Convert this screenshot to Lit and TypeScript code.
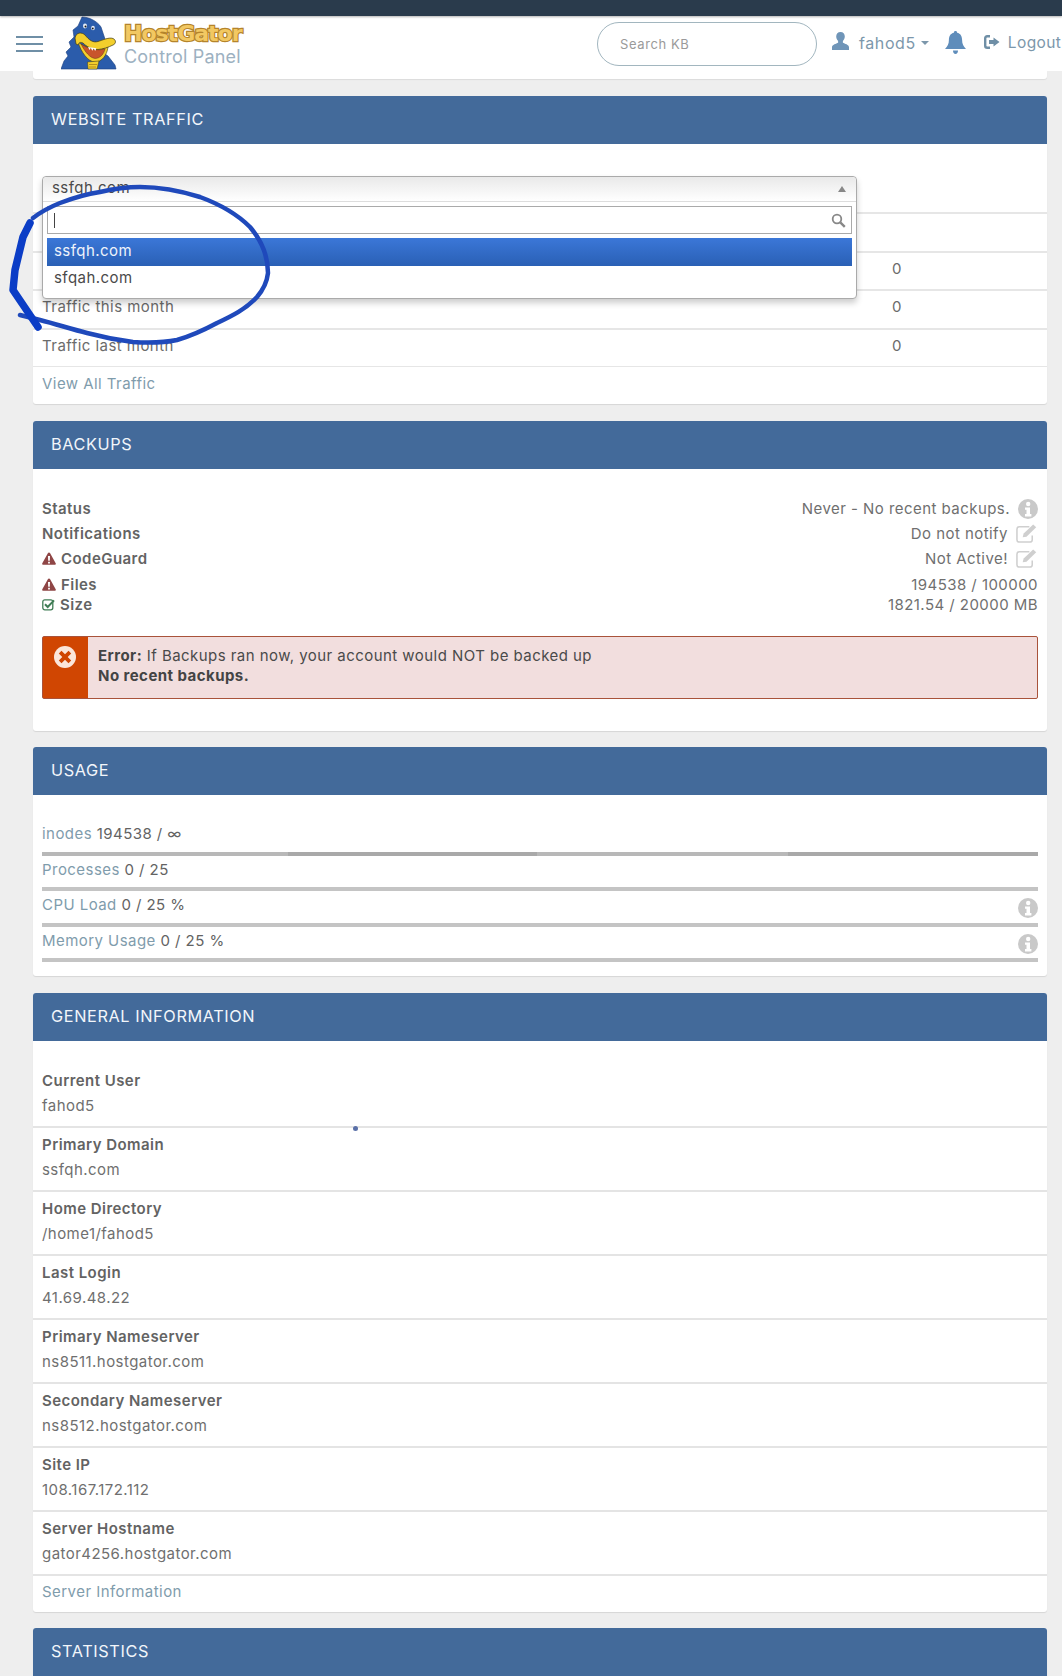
import { LitElement, html, css, svg } from "lit";
import { customElement } from "lit/decorators.js";

const infoIcon = html`<svg class="ic-info" viewBox="0 0 20 20"><circle cx="10" cy="10" r="10" fill="#c9c9c9"/><circle cx="10.2" cy="5" r="2.2" fill="#fff"/><path d="M7 8.4h5v6.6h1.4v2.4H7V15h1.5v-4.2H7z" fill="#fff"/></svg>`;
const editIcon = html`<svg class="ic-edit" viewBox="0 0 24 22"><path d="M15 4H4.500C3 4 2 5 2 6.500V17.500C2 19 3 20 4.500 20H15.500C17 20 18 19 18 17.500V13" fill="none" stroke="#cfcfcf" stroke-width="1.600"/><path d="M8 15l1-4L19 1.500l3.200 3L12 14.500z" fill="#cfcfcf"/></svg>`;
const warnIcon = html`<svg class="ic-warn" viewBox="0 0 14 13"><path d="M7 .5c.5 0 .8.2 1 .6l5.700 10.200c.4.700-.1 1.500-.8 1.500H1.100c-.7 0-1.200-.8-.8-1.500L6 1.100c.2-.4.500-.6 1-.6z" fill="#8f4646"/><path d="M6 4h2l-.2 4.700H6.200zM6.100 9.700h1.800v1.700H6.100z" fill="#fff"/></svg>`;
const checkIcon = html`<svg class="ic-check" viewBox="0 0 13 13"><rect x=".8" y="1.800" width="10" height="10" rx="2" fill="none" stroke="#3f7d55" stroke-width="1.300"/><path d="M3 6.200l2.700 2.800L12 2.400" fill="none" stroke="#3f7d55" stroke-width="2"/></svg>`;

const generalRows: [string, string][] = [
  ["Current User", "fahod5"],
  ["Primary Domain", "ssfqh.com"],
  ["Home Directory", "/home1/fahod5"],
  ["Last Login", "41.69.48.22"],
  ["Primary Nameserver", "ns8511.hostgator.com"],
  ["Secondary Nameserver", "ns8512.hostgator.com"],
  ["Site IP", "108.167.172.112"],
  ["Server Hostname", "gator4256.hostgator.com"],
];

@customElement("app-root")
export class AppRoot extends LitElement {
  static styles = css`
    :host {
      display: block;
      position: relative;
      height: 1676px;
      overflow: hidden;
      background: #eeeeee;
      font-family: Inter, "Liberation Sans", sans-serif;
      font-size: 15px;
      letter-spacing: 0.45px;
      color: #6b6b6b;
    }
    .topbar { height: 16px; background: #2a3b4c; box-shadow: 0 1px 2px rgba(0,0,0,.3); position: relative; }
    .header { height: 55px; background: #fff; display: flex; align-items: center; white-space: nowrap; overflow: hidden; }
    .header > * { flex: none; }
    .burger { width: 27px; margin-left: 16px; display: flex; flex-direction: column; gap: 5px; }
    .burger i { display: block; height: 2px; background: #6f8fa6; }
    .logo { width: 56px; height: 54px; margin: -1px 0 0 18px; }
    .brand { margin-left: 7px; display: flex; flex-direction: column; width: 249px; margin-top: 3px; }
    .brand b {
      font: 900 22px/24px "DejaVu Sans", sans-serif;
      letter-spacing: -1px;
      color: #f2c862;
      -webkit-text-stroke: 2.400px #b4842c;
      paint-order: stroke fill;
    }
    .brand span { font: 400 18px/22px Inter, sans-serif; letter-spacing: 0.2px; color: #9db1c1; }
    .search {
      box-sizing: border-box;
      width: 220px; height: 44px; margin-left: 224px;
      border: 1px solid #a2b6bf; border-radius: 22px;
      padding: 2px 22px; font: inherit; font-size: 13px; letter-spacing: .6px; outline: none; background: #fff;
    }
    .search::placeholder { color: #9a9a9a; }
    .ic-user { width: 17px; height: 18px; margin: -5px 10px 0 15px; }
    .uname { color: #7c97ab; font-size: 16px; letter-spacing: .6px; margin-top: -2px; }
    .uname.out { font-size: 15.500px; letter-spacing: .4px; }
    .caret { width: 0; height: 0; border: 4.500px solid transparent; border-top-color: #7c97ab; border-bottom: 0; margin: -1px 0 0 5px; }
    .ic-bell { width: 21px; height: 23px; margin: -2px 0 0 16px; }
    .ic-logout { width: 16px; height: 14px; margin: -4px 8px 0 18px; }

    main { padding: 0 15px 0 33px; }
    .stub { height: 8px; background: #fff; border-radius: 0 0 3px 3px; box-shadow: 0 1px 1px rgba(0,0,0,.08); margin-bottom: 17px; }
    .panel { position: relative; background: #fff; border-radius: 3px; box-shadow: 0 1px 1px rgba(0,0,0,.1); margin-bottom: 17px; }
    .panel.b16 { margin-bottom: 16px; }
    .phead {
      box-sizing: border-box; height: 48px; padding: 0 0 2px 18px; background: #436a9a; color: #f2f6fa;
      display: flex; align-items: center; font-size: 16.300px; letter-spacing: .6px; border-radius: 3px 3px 0 0;
    }
    a { color: #7f9cac; text-decoration: none; }

    .trow { box-sizing: border-box; display: grid; grid-template-columns: 850px 1fr; align-items: center; padding: 0 0 5px 9px; height: 38.500px; border-top: 2px solid #e6e6e6; }
    .trow.first { height: 68px; border-top: 0; }
    .trow.link { border-top-width: 1px; height: 38px; padding-bottom: 5px; }

    .drop {
      position: absolute; left: 9px; top: 80px; width: 815px; height: 123px; box-sizing: border-box;
      background: #fff; border: 1px solid #aaa; border-radius: 4px;
      box-shadow: 0 4px 6px rgba(0,0,0,.2); color: #4a4a4a;
    }
    .dtop {
      box-sizing: border-box; height: 25px; padding: 0 0 4px 9px; display: flex; align-items: center; justify-content: space-between;
      background: linear-gradient(#e9e9e9, #fff); border-bottom: 1px solid #ddd; border-radius: 4px 4px 0 0;
    }
    .arrow { width: 0; height: 0; border: 4px solid transparent; border-bottom: 6px solid #888; border-top: 0; margin: 4px 10px 0 0; }
    .dsearch { box-sizing: border-box; height: 28px; margin: 4px 4px 4px 4px; border: 1px solid #aaa; display: flex; align-items: center; justify-content: space-between; padding: 0 5px 0 6px; }
    .cursor { width: 1px; height: 15px; background: #444; }
    .ic-mag { width: 15px; height: 15px; }
    .opt { box-sizing: border-box; height: 28px; margin: 0 4px; padding: 0 0 4px 7px; display: flex; align-items: center; }
    .opt.sel { color: #eef3fb; background: linear-gradient(#3b77d8, #2a60b5); }
    .opt + .opt { height: 26px; }

    .bbody { padding: 27px 9px 32px; }
    .brow { display: flex; justify-content: space-between; align-items: center; height: 25px; }
    .brow.h24 { height: 24.500px; }
    .brow.h27 { height: 27px; }
    .brow.h14 { height: 14px; }
    .lab { font-weight: 600; color: #636363; display: flex; align-items: center; }
    .val { display: flex; align-items: center; color: #6f6f6f; }
    .ic-info { width: 20px; height: 20px; margin-left: 8px; flex: none; }
    .ic-edit { width: 23px; height: 21px; margin-left: 7px; flex: none; }
    .ic-warn { width: 14px; height: 13px; margin-right: 5px; flex: none; }
    .ic-check { width: 13px; height: 13px; margin-right: 5px; flex: none; }
    .err {
      box-sizing: border-box; margin-top: 24.500px; height: 63px; display: flex; background: #f2dede;
      border: 1px solid #a9533b; border-radius: 2px; color: #4a4a4a;
    }
    .err .side { width: 45px; background: #d04602; display: flex; justify-content: center; padding: 9px 2px 0 0; box-sizing: border-box; flex: none; }
    .ic-x { width: 22px; height: 22px; }
    .err .msg { padding: 9px 0 0 10px; line-height: 20px; }
    .err b { font-weight: 700; color: #444; }

    .ubody { padding: 25px 9px 14px; }
    .uitem { display: flex; justify-content: space-between; height: 31.500px; line-height: 27px; color: #636363; }
    .uitem .ic-info { margin-top: 7px; }
    .bar { height: 4px; background: #c4c4c4; }
    .bar.seg { background: linear-gradient(90deg, #b8b8b8 0 246px, #a9a9a9 246px 495px, #b8b8b8 495px 746px, #a9a9a9 746px); }

    .grow { box-sizing: border-box; height: 64px; padding: 4.500px 9px 0; border-bottom: 2px solid #e4e4e4; line-height: 25px; }
    .grow.first { height: 86.500px; padding-top: 27px; }
    .grow b { display: block; font-weight: 600; color: #636363; }
    .grow span { color: #6f6f6f; }
    .glink { box-sizing: border-box; height: 36.500px; padding: 0 0 5.500px 9px; display: flex; align-items: center; }
    .stats { height: 60px; }

    .scribble { position: absolute; left: 0; top: 0; width: 300px; height: 360px; pointer-events: none; }
    .dot { position: absolute; left: 353px; top: 1126px; width: 5px; height: 5px; border-radius: 50%; background: #5a70a8; }
  `;

  render() {
    return html`
      <div class="topbar"></div>
      <header class="header">
        <div class="burger"><i></i><i></i><i></i></div>
        <svg class="logo" viewBox="0 0 56 54">
          <path d="M21 1C28 1 36 5 40 11L43 20 45 26 41 36 47 40 54 49 55 53 0 53 3 45 7 40 5 36 10 31 8 26 13 21 12 14 17 10Z" fill="#2b5cab" stroke="#1d3f80" stroke-width=".6"/>
          <ellipse cx="24" cy="10" rx="2" ry="2.400" fill="#e6edf7"/><ellipse cx="32" cy="12" rx="1.800" ry="2.200" fill="#e6edf7"/>
          <circle cx="24.500" cy="10.500" r="1" fill="#1a1a1a"/><circle cx="31.800" cy="12.500" r=".9" fill="#1a1a1a"/>
          <path d="M17 26C20 36 27 46 34 46 41 46 46 39 47 31 38 35 26 33 17 26Z" fill="#f3cf2c" stroke="#3d3a18" stroke-width=".6"/>
          <path d="M20 28C24 36 29 42 34 42.500 39 42.500 43 38 44 33 36 35 27 33 20 28Z" fill="#c8552c" stroke="#4a2413" stroke-width=".4"/>
          <path d="M26.500 46L38 45 36 53H27Z" fill="#f3cf2c" stroke="#3d3a18" stroke-width=".5"/>
          <path d="M14 22C15 16 21 16 24 19 28 24 32 27 37 25.500 42 24 48 21 52 22.500 55.500 24 55 28 52 29 47 31.500 42 33 37 33.500 30 33.500 25 30 22 27 20 26 18 26 17 29L15 28Z" fill="#f3cf2c" stroke="#3d3a18" stroke-width=".7"/>
          <path d="M27 31l1.500 3 1.300-2 1.500 2.800 1.400-2.300 1.500 2.500 1.200-2.700z" fill="#fff"/>
          <path d="M28 48.500h8M28 51h7" stroke="#b98f1c" stroke-width="1"/>
        </svg>
        <div class="brand"><b>HostGator</b><span>Control Panel</span></div>
        <input class="search" placeholder="Search KB" />
        <svg class="ic-user" viewBox="0 0 17 18"><path d="M8.500 0c2.700 0 4.300 2 4.300 4.600 0 1.800-.8 3.400-1.900 4.500v1.600c1.800.9 6.100 1.900 6.100 4.500V18H0v-2.800c0-2.600 4.300-3.600 6.100-4.500V9.100C5 8 4.200 6.400 4.200 4.600 4.200 2 5.800 0 8.500 0z" fill="#6f95b8"/></svg>
        <span class="uname">fahod5</span><span class="caret"></span>
        <svg class="ic-bell" viewBox="0 0 21 23"><path d="M10.500 0c1 0 1.600.7 1.600 1.700 3.400.7 5 3.500 5 7.300 0 4 1.400 6.400 3.900 9H0c2.500-2.600 3.900-5 3.900-9 0-3.800 1.600-6.600 5-7.300C8.900.7 9.500 0 10.500 0zM8 19.500h5c0 2-1 3.500-2.500 3.500S8 21.500 8 19.500z" fill="#5f8dbb"/></svg>
        <svg class="ic-logout" viewBox="0 0 16 14"><path d="M6 1.200H3.200C2 1.200 1.200 2 1.200 3.200v7.600c0 1.200.8 2 2 2H6" fill="none" stroke="#6f8fa6" stroke-width="2.400"/><path d="M9.500 2.500L15.500 7l-6 4.500V9H5V5h4.500z" fill="#6f8fa6"/></svg>
        <span class="uname out">Logout</span>
      </header>

      <main>
        <div class="stub"></div>

        <section class="panel">
          <div class="phead">WEBSITE TRAFFIC</div>
          <div class="trow first"></div>
          <div class="trow"></div>
          <div class="trow"><span></span><span>0</span></div>
          <div class="trow"><span>Traffic this month</span><span>0</span></div>
          <div class="trow"><span>Traffic last month</span><span>0</span></div>
          <div class="trow link"><a href="#">View All Traffic</a></div>
          <div class="drop">
            <div class="dtop"><span>ssfqh.com</span><i class="arrow"></i></div>
            <div class="dsearch"><i class="cursor"></i>
              <svg class="ic-mag" viewBox="0 0 15 15"><circle cx="6" cy="6" r="4.300" fill="none" stroke="#888" stroke-width="1.800"/><path d="M9.300 9.300l4.500 4.500" stroke="#888" stroke-width="2.400"/></svg>
            </div>
            <div class="opt sel">ssfqh.com</div>
            <div class="opt">sfqah.com</div>
          </div>
        </section>

        <section class="panel b16">
          <div class="phead">BACKUPS</div>
          <div class="bbody">
            <div class="brow"><span class="lab">Status</span><span class="val">Never - No recent backups.${infoIcon}</span></div>
            <div class="brow h24"><span class="lab">Notifications</span><span class="val">Do not notify${editIcon}</span></div>
            <div class="brow"><span class="lab">${warnIcon}CodeGuard</span><span class="val">Not Active!${editIcon}</span></div>
            <div class="brow h27"><span class="lab">${warnIcon}Files</span><span class="val">194538 / 100000</span></div>
            <div class="brow h14"><span class="lab">${checkIcon}Size</span><span class="val">1821.54 / 20000 MB</span></div>
            <div class="err">
              <div class="side"><svg class="ic-x" viewBox="0 0 22 22"><circle cx="11" cy="11" r="11" fill="#fbe6da"/><path d="M7.500 4.800L11 8.300l3.500-3.500 2.700 2.700L13.700 11l3.500 3.500-2.700 2.700L11 13.700l-3.500 3.500-2.700-2.700L8.300 11 4.800 7.500z" fill="#d04602"/></svg></div>
              <div class="msg"><b>Error:</b> If Backups ran now, your account would NOT be backed up<br /><b>No recent backups.</b></div>
            </div>
          </div>
        </section>

        <section class="panel">
          <div class="phead">USAGE</div>
          <div class="ubody">
            <div class="uitem"><span><a href="#">inodes</a> 194538 / ∞</span></div><div class="bar seg"></div>
            <div class="uitem"><span><a href="#">Processes</a> 0 / 25</span></div><div class="bar"></div>
            <div class="uitem"><span><a href="#">CPU Load</a> 0 / 25 %</span>${infoIcon}</div><div class="bar"></div>
            <div class="uitem"><span><a href="#">Memory Usage</a> 0 / 25 %</span>${infoIcon}</div><div class="bar"></div>
          </div>
        </section>

        <section class="panel b16">
          <div class="phead">GENERAL INFORMATION</div>
          ${generalRows.map(
            ([k, v], i) => html`<div class="grow ${i === 0 ? "first" : ""}"><b>${k}</b><span>${v}</span></div>`
          )}
          <div class="glink"><a href="#">Server Information</a></div>
        </section>

        <section class="panel stats">
          <div class="phead">STATISTICS</div>
        </section>
      </main>

      <i class="dot"></i>
      <svg class="scribble" viewBox="0 0 300 360">
        ${svg`
          <path d="M33 218C42 211 50 207 60 203C73 198 87 194 100 192C113 189 127 187 140 187C161 187 181 191 200 197C219 204 237 214 250 227C261 240 268 256 268 273C267 282 263 290 257 297C246 309 232 316 217 323C204 330 191 336 177 340C162 343 148 343 133 342C117 340 102 337 87 333C71 329 56 324 40 320L20 315" fill="none" stroke="#1f49bb" stroke-width="4.500" stroke-linecap="round"/>
          <path d="M30 223L23 237L15 270L13 290L38 327" fill="none" stroke="#0b3dc6" stroke-width="7.500" stroke-linecap="round" stroke-linejoin="round"/>
        `}
      </svg>
    `;
  }
}
